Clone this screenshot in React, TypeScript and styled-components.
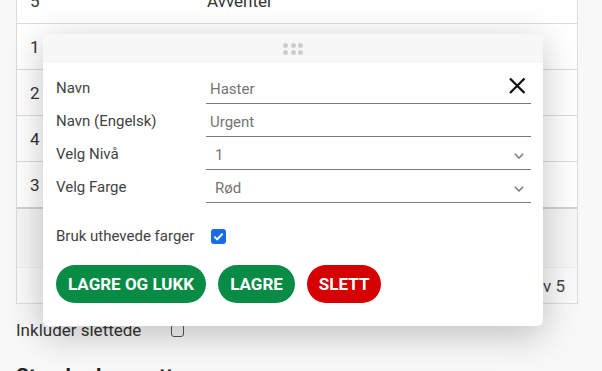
import React from 'react';
import styled, { createGlobalStyle } from 'styled-components';

const GlobalStyle = createGlobalStyle`
  body {
    margin: 0;
    background: #f8f8f8;
    font-family: Roboto, "Liberation Sans", sans-serif;
    overflow: hidden;
  }
`;

const rows = [
  { id: '5', name: 'Avventer' },
  { id: '1', name: '' },
  { id: '2', name: '' },
  { id: '4', name: '' },
  { id: '3', name: '' },
];

export default function App() {
  return (
    <>
      <GlobalStyle />
      <Page>
        <Table>
          {rows.map((row, i) => (
            <Row key={row.id} last={i === rows.length - 1}>
              <Cell>{row.id}</Cell>
              <Cell>{row.name}</Cell>
            </Row>
          ))}
          <EmptyArea />
          <Footer>1-5 av 5</Footer>
        </Table>
        <IncludeRow>
          Inkluder slettede
          <EmptyBox />
        </IncludeRow>
        <Heading>Standardoppsett</Heading>
      </Page>

      <Dialog>
        <DragHeader>
          <Dots>
            {Array.from({ length: 6 }).map((_, i) => (
              <Dot key={i} />
            ))}
          </Dots>
        </DragHeader>
        <Body>
          <FieldRow>
            <Label>Navn</Label>
            <Field>
              <Value>Haster</Value>
              <CloseIcon viewBox="0 0 18 18">
                <path d="M2 1.5 L16.5 16 M16.5 1.5 L2 16" />
              </CloseIcon>
            </Field>
          </FieldRow>
          <FieldRow>
            <Label>Navn (Engelsk)</Label>
            <Field>
              <Value>Urgent</Value>
            </Field>
          </FieldRow>
          <FieldRow>
            <Label>Velg Nivå</Label>
            <Field>
              <Value select>1</Value>
              <Chevron viewBox="0 0 10 6">
                <path d="M0.8 0.8 L5 5 L9.2 0.8" />
              </Chevron>
            </Field>
          </FieldRow>
          <FieldRow>
            <Label>Velg Farge</Label>
            <Field>
              <Value select>Rød</Value>
              <Chevron viewBox="0 0 10 6">
                <path d="M0.8 0.8 L5 5 L9.2 0.8" />
              </Chevron>
            </Field>
          </FieldRow>

          <CheckRow>
            Bruk uthevede farger
            <CheckedBox>
              <svg viewBox="0 0 15 15" width="15" height="15">
                <path d="M3.4 7.6 L6.2 10.4 L11.6 4.6" />
              </svg>
            </CheckedBox>
          </CheckRow>

          <Buttons>
            <Button>LAGRE OG LUKK</Button>
            <Button>LAGRE</Button>
            <Button danger>SLETT</Button>
          </Buttons>
        </Body>
      </Dialog>
    </>
  );
}

const Page = styled.div`
  margin-top: -23px;
  padding: 0 24px 0 16px;
`;

const Table = styled.div`
  background: #fff;
  border: 1px solid #dcdcdc;
`;

const Row = styled.div<{ last?: boolean }>`
  display: grid;
  grid-template-columns: 177px 1fr;
  align-items: center;
  height: 45px;
  padding-left: 13px;
  border-bottom: ${(p) => (p.last ? '2px solid #d2d2d2' : '1px solid #dcdcdc')};
  font-size: 17px;
  color: #333;
`;

const Cell = styled.div`
  white-space: nowrap;
`;

const EmptyArea = styled.div`
  height: 58px;
  background: #f6f6f6;
  border-bottom: 1px solid #ececec;
`;

const Footer = styled.div`
  height: 35px;
  display: flex;
  align-items: center;
  justify-content: flex-end;
  padding-right: 12px;
  font-size: 17px;
  color: #444;
  background: #fafafa;
`;

const IncludeRow = styled.div`
  display: flex;
  align-items: center;
  margin-top: 14px;
  height: 24px;
  font-size: 17px;
  color: #333;
`;

const EmptyBox = styled.span`
  width: 11px;
  height: 11px;
  margin-left: 30px;
  border: 1.5px solid #555;
  border-radius: 3px;
`;

const Heading = styled.h2`
  margin: 20px 0 0;
  font-size: 21px;
  line-height: 28px;
  font-weight: 700;
  color: #222;
`;

const Dialog = styled.div`
  position: absolute;
  left: 43px;
  top: 34px;
  width: 500px;
  background: #fff;
  border-radius: 6px;
  overflow: hidden;
  box-shadow: 0 8px 36px rgba(0, 0, 0, 0.24);
`;

const DragHeader = styled.div`
  height: 29px;
  background: #f7f7f7;
  display: flex;
  align-items: center;
  justify-content: center;
`;

const Dots = styled.div`
  display: grid;
  grid-template-columns: repeat(3, 5px);
  gap: 2px 2.5px;
`;

const Dot = styled.span`
  width: 5px;
  height: 5px;
  border-radius: 50%;
  background: #cfcfcf;
`;

const Body = styled.div`
  padding: 8px 12px 23px 13px;
`;

const FieldRow = styled.div`
  display: grid;
  grid-template-columns: 150px 1fr;
  height: 33px;
`;

const Label = styled.div`
  font-size: 15px;
  color: #434343;
  padding-top: 8px;
  white-space: nowrap;
`;

const Field = styled.div`
  display: flex;
  align-items: center;
  justify-content: space-between;
  border-bottom: 1px solid #7a7a7a;
  padding-top: 4px;
`;

const Value = styled.span<{ select?: boolean }>`
  font-size: 15px;
  color: #757575;
  padding-left: ${(p) => (p.select ? '9px' : '4px')};
`;

const CloseIcon = styled.svg`
  width: 18px;
  height: 18px;
  margin-right: 5px;
  margin-top: -6px;
  fill: none;
  stroke: #111;
  stroke-width: 2.3;
`;

const Chevron = styled.svg`
  width: 10px;
  height: 6px;
  margin-right: 7px;
  margin-top: 2px;
  fill: none;
  stroke: #7a7a7a;
  stroke-width: 1.5;
`;

const CheckRow = styled.div`
  display: flex;
  align-items: center;
  height: 24px;
  margin-top: 21px;
  font-size: 15px;
  color: #434343;
`;

const CheckedBox = styled.span`
  display: flex;
  width: 15px;
  height: 15px;
  margin-left: 17px;
  border-radius: 3px;
  background: #1a6be6;

  path {
    fill: none;
    stroke: #fff;
    stroke-width: 2;
  }
`;

const Buttons = styled.div`
  display: flex;
  gap: 12px;
  margin-top: 17px;
`;

const Button = styled.button<{ danger?: boolean }>`
  height: 38px;
  padding: 0 12px;
  border: none;
  border-radius: 19px;
  background: ${(p) => (p.danger ? '#d60000' : '#088b44')};
  color: #fff;
  font-family: Roboto, "Liberation Sans", sans-serif;
  font-size: 17px;
  font-weight: 700;
`;
